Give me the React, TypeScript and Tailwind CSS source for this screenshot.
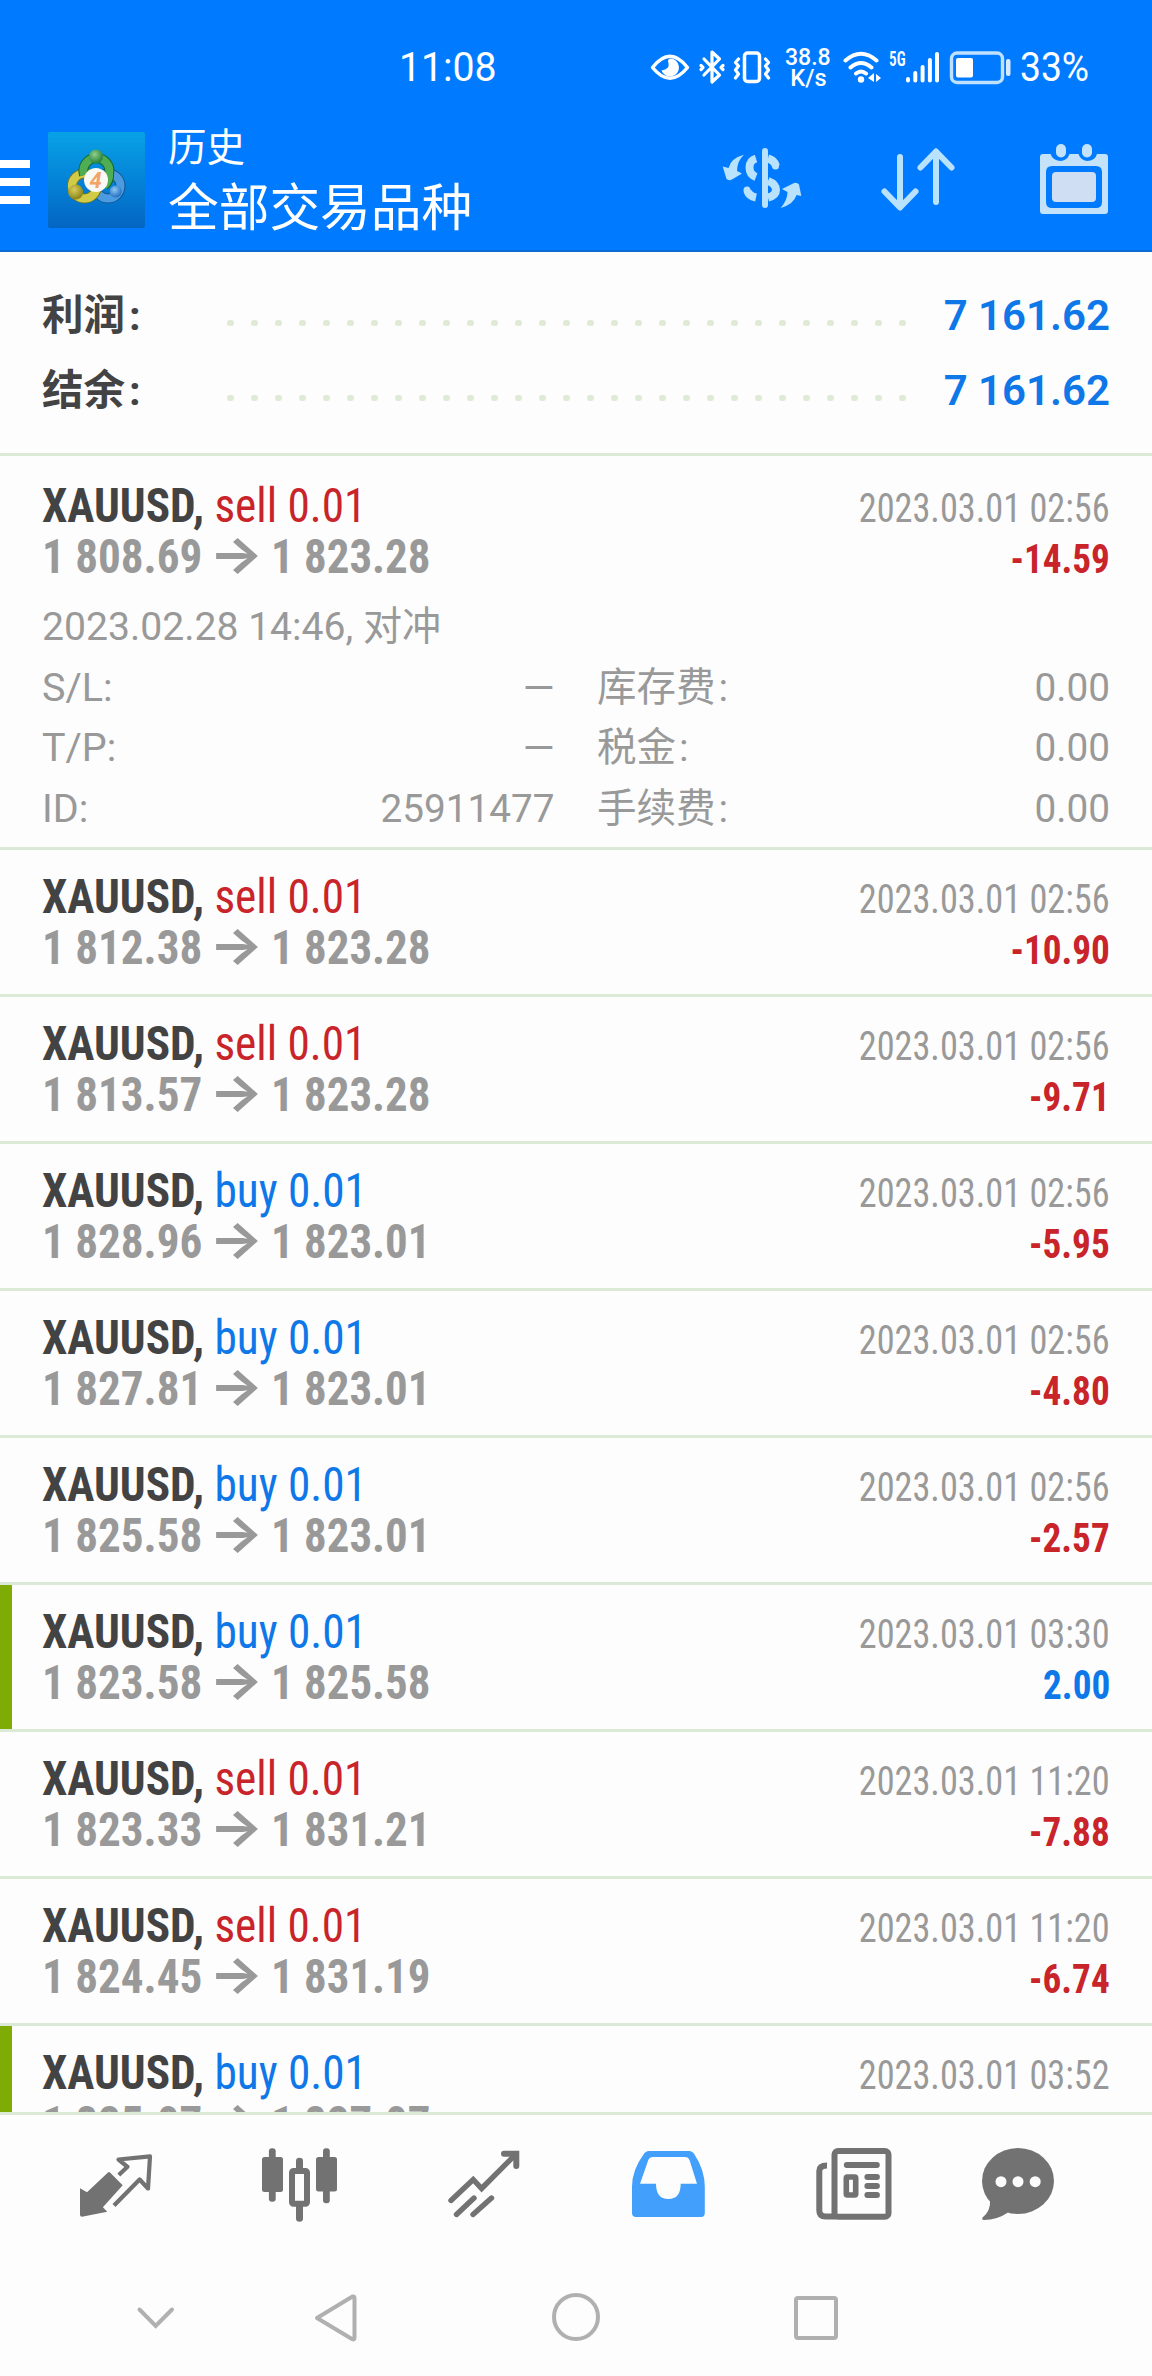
import type { ReactNode } from 'react'

type Side = 'buy' | 'sell'

interface Deal {
  side: Side
  open: string
  close: string
  time: string
  profit?: string
  takeProfit?: boolean
}

const deals: Deal[] = [
  { side: 'sell', open: '1 808.69', close: '1 823.28', time: '2023.03.01 02:56', profit: '-14.59' },
  { side: 'sell', open: '1 812.38', close: '1 823.28', time: '2023.03.01 02:56', profit: '-10.90' },
  { side: 'sell', open: '1 813.57', close: '1 823.28', time: '2023.03.01 02:56', profit: '-9.71' },
  { side: 'buy', open: '1 828.96', close: '1 823.01', time: '2023.03.01 02:56', profit: '-5.95' },
  { side: 'buy', open: '1 827.81', close: '1 823.01', time: '2023.03.01 02:56', profit: '-4.80' },
  { side: 'buy', open: '1 825.58', close: '1 823.01', time: '2023.03.01 02:56', profit: '-2.57' },
  { side: 'buy', open: '1 823.58', close: '1 825.58', time: '2023.03.01 03:30', profit: '2.00', takeProfit: true },
  { side: 'sell', open: '1 823.33', close: '1 831.21', time: '2023.03.01 11:20', profit: '-7.88' },
  { side: 'sell', open: '1 824.45', close: '1 831.19', time: '2023.03.01 11:20', profit: '-6.74' },
  { side: 'buy', open: '1 825.07', close: '1 827.07', time: '2023.03.01 03:52', takeProfit: true },
]

const details = [
  ['S/L:', '–', '库存费', '0.00'],
  ['T/P:', '–', '税金', '0.00'],
  ['ID:', '25911477', '手续费', '0.00'],
]

const StatusBar = () => (
  <div className="flex h-32 items-center pt-2 text-white">
    <span className="ml-[399px] w-[250px] text-[40px] leading-none">
      <span className="inline-block origin-left scale-x-[.98]">11:08</span>
    </span>
    <svg width="42" height="36" viewBox="649 50 42 36" fill="none">
      <path d="M652.5 67.5Q670 45 687.500 67.500Q670 89 652.500 67.500Z" stroke="#fff" strokeWidth="3.500" strokeLinejoin="round" />
      <path d="M670 58.500A9 9 0 1 1 661.500 70.500Q670 69 668.500 63Q667 59.500 670 58.500Z" fill="#fff" />
    </svg>
    <svg className="ml-[7px]" width="28" height="36" viewBox="698 50 28 36" fill="none" stroke="#fff" strokeWidth="3.200" strokeLinejoin="round" strokeLinecap="round">
      <path d="M704 59L719.500 75L712 82V52L719.500 59L704 75" />
      <path d="M701 65.500L703 67.500L701 69.500M723 65.500L721 67.500L723 69.500" />
    </svg>
    <svg className="ml-[5px]" width="42" height="36" viewBox="731 50 42 36" fill="none" stroke="#fff" strokeWidth="3.500" strokeLinejoin="round" strokeLinecap="round">
      <rect x="744.500" y="53" width="15" height="28.500" rx="3" />
      <path d="M738.500 59L735.500 62.500L738.500 66L735.500 70L738.500 74L735.500 78M765.500 59L768.500 62.500L765.500 66L768.500 70L765.500 74L768.500 78" strokeWidth="3.200" />
    </svg>
    <div className="ml-2.5 flex w-[50px] flex-col items-center text-[24px] leading-[21.5px] font-medium">
      <span className="scale-x-[.96]">38.8</span>
      <span className="scale-x-[.98]">K/s</span>
    </div>
    <svg className="ml-[8px]" width="42" height="36" viewBox="841 50 42 36" fill="none" stroke="#fff" strokeWidth="4" strokeLinecap="round">
      <path d="M845.500 60.500Q861 47 876.500 60.500M850.500 67.500Q861 58.500 871.500 67.500M856 73.500Q861 69.500 866 73.500" />
      <circle cx="861" cy="79.500" r="3.200" fill="#fff" stroke="none" />
      <path d="M874 73V82L868 78ZM876 74L881 78L876 82Z" fill="#fff" stroke="none" />
    </svg>
    <span className="ml-1.5 w-4 self-start pt-[41px] text-[20px] leading-[20px] font-semibold">
      <span className="inline-block origin-left scale-x-[.76] [font-stretch:75%]">5G</span>
    </span>
    <svg width="36" height="36" viewBox="905 50 36 36" stroke="#fff" strokeWidth="4" strokeLinecap="round">
      <path d="M908 79V80.500M915.300 73V80.500M922.600 67V80.500M929.900 60V80.500M937 54V80.500" />
    </svg>
    <svg className="ml-[7px]" width="66" height="36" viewBox="948 50 66 36">
      <rect x="951.500" y="53" width="51" height="29.500" rx="5.500" fill="none" stroke="#bfe0ff" strokeWidth="3.400" />
      <rect x="956" y="58" width="17" height="19.500" rx="2" fill="#fff" />
      <rect x="1006" y="59" width="4.500" height="17" rx="2" fill="#d6ebff" />
    </svg>
    <span className="ml-1.5 origin-left scale-x-[.93] text-[40px] leading-none">33%</span>
  </div>
)

const AppLogo = () => (
  <svg className="ml-[18px]" width="97" height="96" viewBox="0 0 97 96">
    <defs>
      <linearGradient id="sky" x1="0" y1="0" x2="0" y2="1">
        <stop offset="0" stopColor="#08a2e6" />
        <stop offset="0.5" stopColor="#0483d8" />
        <stop offset="1" stopColor="#0365c2" />
      </linearGradient>
      <radialGradient id="leaf" cx="0.4" cy="0.35" r="0.7">
        <stop offset="0" stopColor="#8fd08a" />
        <stop offset="1" stopColor="#1d7a35" />
      </radialGradient>
      <radialGradient id="gold" cx="0.4" cy="0.35" r="0.7">
        <stop offset="0" stopColor="#d9ce5a" />
        <stop offset="1" stopColor="#827d14" />
      </radialGradient>
      <radialGradient id="water" cx="0.4" cy="0.35" r="0.7">
        <stop offset="0" stopColor="#8cc8f5" />
        <stop offset="1" stopColor="#1c68bd" />
      </radialGradient>
    </defs>
    <rect width="97" height="96" rx="2" fill="url(#sky)" />
    <circle cx="60" cy="54" r="12.500" fill="none" stroke="#155390" strokeWidth="10" />
    <circle cx="60" cy="54" r="12.500" fill="none" stroke="#4b9be0" strokeWidth="8" />
    <circle cx="36.500" cy="54" r="12.500" fill="none" stroke="#76781c" strokeWidth="10" />
    <circle cx="36.500" cy="54" r="12.500" fill="none" stroke="#d2cb48" strokeWidth="8" />
    <path d="M36 43A13 13 0 1 1 61 42Q62 48 56 54" fill="none" stroke="#17672c" strokeWidth="10" />
    <path d="M36 43A13 13 0 1 1 61 42Q62 48 56 54" fill="none" stroke="#4fae53" strokeWidth="8" />
    <circle cx="48" cy="24.500" r="7" fill="url(#leaf)" />
    <circle cx="27.700" cy="60" r="7.500" fill="url(#gold)" />
    <circle cx="67.700" cy="59.500" r="6" fill="url(#water)" />
    <circle cx="48" cy="48" r="12" fill="#f8f8f4" />
    <text x="47.500" y="56" textAnchor="middle" fontFamily="Roboto, sans-serif" fontSize="22" fontWeight="700" fontStyle="italic" fill="#f2a468">
      4
    </text>
  </svg>
)

const Header = () => (
  <div className="flex h-[124px] items-start border-b-2 border-[#0b6cd4] pt-1 text-white">
    <div className="mt-7 flex w-[30px] flex-col gap-2.5">
      <div className="h-2 bg-white" />
      <div className="h-2 bg-white" />
      <div className="h-2 bg-white" />
    </div>
    <AppLogo />
    <div className="-mt-1 ml-[23px] flex-1">
      <div className="text-[38.5px] leading-[39px]">历史</div>
      <div className="mt-3 text-[50.7px] leading-[60px]">全部交易品种</div>
    </div>
    <svg className="mt-2" width="88" height="80" viewBox="0 0 88 80" fill="none">
      <g stroke="#b9e2fc" strokeWidth="8">
        <path d="M40 18.500Q33.500 20.500 33.500 27.500Q33.500 34.500 40 37" />
        <path d="M31.500 51Q33 56 40 57.500" />
        <path d="M52 18.500Q58 20 60 26" />
        <path d="M52 41Q60 44 60 50Q60 55.500 52 57.500" />
      </g>
      <g stroke="#b9e2fc" strokeLinecap="round">
        <path d="M49 11V65" strokeWidth="6" />
        <path d="M31 50V50.500M59.500 25.500V26" strokeWidth="7" />
      </g>
      <g fill="#b9e2fc">
        <path d="M28 14.700Q15 18 12.500 28L6.700 26.500L10.500 39Q12.500 41 16 39.500L26 33.500L21 31Q21 21 28 14.700Z" />
        <path d="M64.700 68Q78 64 80.500 55L85.300 56L83 44.500Q80.500 41.500 77 43.500L66 49L71.500 52Q71.500 60 64.700 68Z" />
      </g>
    </svg>
    <svg className="mt-2 ml-[72px]" width="84" height="80" viewBox="0 0 84 80" fill="none" stroke="#b9e2fc" strokeWidth="6" strokeLinecap="round" strokeLinejoin="round">
      <path d="M24 17V67M8.500 51.500L24 67.500L39.500 51.500" />
      <path d="M60 62V12M44.500 27.500L60 11.500L75.500 27.500" />
    </svg>
    <svg className="mt-2 mr-9 ml-[76px]" width="80" height="80" viewBox="0 0 80 80" fill="#c4e3fa">
      <path
        fillRule="evenodd"
        d="M7 14H14.500Q17 21 25 21Q31.500 20 33.500 14H42.500Q44.500 20 51 21Q59 21 61 14H69Q72 14 72 17V71Q72 74 69 74H7Q4 74 4 71V17Q4 14 7 14ZM16 26Q10 26 10 32V62Q10 68 16 68H60Q66 68 66 62V32Q66 26 60 26Z"
      />
      <rect x="16" y="32" width="44" height="30" rx="4" fill="#cfdef2" />
      <rect x="20" y="4" width="10" height="13.500" rx="5" />
      <rect x="46" y="4" width="10" height="13.500" rx="5" />
    </svg>
  </div>
)

const SummaryRow = ({ label, value }: { label: string; value: string }) => (
  <div className="flex h-[75px] items-center">
    <span className="w-[185px] text-[41.5px] leading-[75px] font-bold text-[#434343]">
      {label}
      <span className="ml-1">:</span>
    </span>
    <div className="mt-[15px] flex flex-1 gap-[17.5px]">
      {Array.from({ length: 29 }, (_, i) => (
        <div key={i} className="size-[6.5px] rounded-full bg-[#e0ebd5]" />
      ))}
    </div>
    <span className="text-[42px] leading-[75px] font-semibold text-[#0f78e8]">{value}</span>
  </div>
)

const Profit = ({ value }: { value: string }) => (
  <span className={value.startsWith('-') ? 'text-[#c8242a]' : 'text-[#0f78e8]'}>{value}</span>
)

const DealRow = ({ deal, children }: { deal: Deal; children?: ReactNode }) => (
  <div className="flex shrink-0 border-b-[3px] border-[#dbead7]">
    <div className={deal.takeProfit ? 'w-3 bg-[#7eac05]' : 'w-3'} />
    <div className={children ? 'h-[391px] flex-1 pt-6 pr-[42px] pl-[30px]' : 'h-36 flex-1 pt-[21px] pr-[42px] pl-[30px]'}>
      <div className="flex h-[102px] justify-between">
        <div className="text-[48px] leading-[51px] whitespace-nowrap">
          <div className="w-fit origin-left scale-x-[.943] [font-stretch:75%]">
            <span className="font-bold text-[#434343]">XAUUSD,</span>{' '}
            <span className={deal.side === 'buy' ? 'text-[#0f78e8]' : 'text-[#c8242a]'}>{deal.side} 0.01</span>
          </div>
          <div className="flex font-bold text-[#999]">
            <span className="w-[169px] origin-left scale-x-[.94] [font-stretch:75%]">{deal.open}</span>
            <span className="-mt-[3px] flex h-[51px] w-[50px] justify-center font-[Inter] text-[51px]">
              <span className="scale-x-[1.12]">→</span>
            </span>
            <span className="ml-2.5 origin-left scale-x-[.935] [font-stretch:75%]">{deal.close}</span>
          </div>
        </div>
        <div className="flex flex-col items-end pt-[3px] text-[40px] leading-[51px] [font-stretch:75%]">
          <span className="origin-right scale-x-[.907] text-[#999]">{deal.time}</span>
          {deal.profit && (
            <span className="origin-right scale-x-[.93] font-bold">
              <Profit value={deal.profit} />
            </span>
          )}
        </div>
      </div>
      {children}
    </div>
  </div>
)

const DealDetails = () => (
  <div className="mt-[14.5px] text-[39.5px] text-[#999]">
    <div className="w-fit origin-left scale-x-[.99] leading-[60px]">2023.02.28 14:46, 对冲</div>
    {details.map(([left, leftValue, right, rightValue]) => (
      <div key={left} className="flex h-[60.5px] leading-[61px]">
        <div className="flex w-[513px] justify-between">
          <span>{left}</span>
          <span className={leftValue === '–' ? '-mr-0.5 origin-right scale-x-[1.38]' : 'origin-right scale-x-[.98]'}>{leftValue}</span>
        </div>
        <div className="ml-[42px] flex flex-1 justify-between">
          <span>
            {right}
            <span className="ml-[3px]">:</span>
          </span>
          <span className="origin-right scale-x-[.98]">{rightValue}</span>
        </div>
      </div>
    ))}
  </div>
)

const TabBar = () => (
  <div className="flex h-[145px] gap-[104px] pt-[29px] pl-[76px] text-[#727272]">
    <svg width="80" height="80" viewBox="0 0 80 80" fill="currentColor">
      <path d="M4 44.300L11 48.300L32 28.500Q33 27.500 34 28.500L46.700 41.300L26.900 63.300L31.300 67.700L6 72.700Q4 72.700 4 71Z" />
      <path d="M42.800 31L51.500 22.800L42.500 15.500L74 12.300L72 44.500L63.600 35.500L38 61.500" fill="none" stroke="currentColor" strokeWidth="4.200" strokeLinejoin="round" />
    </svg>
    <svg width="80" height="80" viewBox="0 0 80 80" fill="currentColor">
      <rect x="8.900" y="4.300" width="6.800" height="53.500" rx="3" />
      <rect x="2" y="13" width="21" height="35" rx="2.500" />
      <rect x="63" y="4.300" width="6.800" height="55" rx="3" />
      <rect x="56" y="13" width="21" height="34.500" rx="2.500" />
      <path d="M36 27V17Q36 13.700 39.500 13.700Q43 13.700 43 17V27ZM36 60V74.500Q36 77.700 39.500 77.700Q43 77.700 43 74.500V60Z" />
      <rect x="32" y="27" width="15" height="32.700" rx="1.500" fill="none" stroke="currentColor" strokeWidth="6" />
    </svg>
    <svg width="80" height="80" viewBox="0 0 80 80" fill="none" stroke="currentColor" strokeWidth="5.400" strokeLinecap="round">
      <path d="M7 56.500L29.200 35.500L37.600 44.500L70 12" strokeLinejoin="miter" />
      <path d="M60 9.700H72.300V22" strokeWidth="6" />
      <path d="M12.500 70.500L30 54M29 70.500L47.500 54" />
    </svg>
    <svg width="80" height="80" viewBox="0 0 80 80" fill="#429ffb">
      <path
        fillRule="evenodd"
        d="M21 7H61Q64.500 7 66.500 10.500Q76.800 26 76.800 43V69Q76.800 73 73 73H8Q4 73 4 69V43Q4 26 15.500 10.500Q17.500 7 21 7ZM25 13Q21.500 13 20.300 16L12 39.700H28Q28 55 40.300 55Q52.700 55 52.700 39.700H69L61.500 16Q60.400 13 57 13Z"
      />
    </svg>
    <svg width="80" height="80" viewBox="0 0 80 80" fill="currentColor">
      <path d="M15 21.500Q7.300 21.500 7.300 27V66.500Q7.300 72.500 13.500 72.500H24" fill="none" stroke="currentColor" strokeWidth="6" />
      <rect x="22.500" y="7" width="54" height="65.700" rx="3.500" fill="none" stroke="currentColor" strokeWidth="6" />
      <rect x="31.800" y="18" width="36" height="6" rx="3" />
      <rect x="34.300" y="33" width="9.400" height="18" rx="1" fill="none" stroke="currentColor" strokeWidth="5.600" />
      <rect x="52.400" y="30" width="15.500" height="6" rx="3" />
      <rect x="52.400" y="39" width="15.500" height="6" rx="3" />
      <rect x="52.400" y="48" width="15.500" height="6" rx="3" />
    </svg>
    <svg className="-ml-5" width="80" height="80" viewBox="0 0 80 80" fill="currentColor">
      <ellipse cx="42" cy="37" rx="36" ry="33" />
      <path d="M14 55Q15 67 6.500 73.500Q5.500 76 8 76Q21 76 32 68.500Z" />
      <g fill="#fdfdfd">
        <circle cx="25" cy="37.700" r="5.500" />
        <circle cx="42" cy="37.700" r="5.500" />
        <circle cx="59.200" cy="37.700" r="5.500" />
      </g>
    </svg>
  </div>
)

const SystemNav = () => (
  <div className="flex h-[116px] items-center pl-[130px]">
    <svg width="52" height="52" viewBox="130 2292 52 52" fill="none" stroke="#b0b0b0" strokeWidth="4" strokeLinecap="round">
      <path d="M139.500 2309.500L155.700 2326L172 2309.500" />
    </svg>
    <svg className="ml-[128px]" width="52" height="52" viewBox="310 2292 52 52" fill="none" stroke="#b0b0b0" strokeWidth="4" strokeLinejoin="round">
      <path d="M317 2318L352.500 2296.500Q354.500 2296 354.500 2298V2337.500Q354.500 2340.500 352 2339Z" />
    </svg>
    <svg className="ml-[188px]" width="52" height="52" viewBox="550 2292 52 52" fill="none" stroke="#b0b0b0" strokeWidth="4">
      <circle cx="576" cy="2317" r="22" />
    </svg>
    <svg className="ml-[188px]" width="52" height="52" viewBox="790 2292 52 52" fill="none" stroke="#b0b0b0" strokeWidth="4">
      <rect x="796" y="2298" width="40" height="40" rx="2" />
    </svg>
  </div>
)

export default function App() {
  return (
    <div className="flex h-[2376px] w-[1152px] flex-col overflow-hidden bg-[#fdfdfd] font-['Roboto','Noto_Sans_CJK_SC',sans-serif]">
      <div className="bg-[#007bff]">
        <StatusBar />
        <Header />
      </div>
      <div className="h-[204px] border-b-[3px] border-[#dbead7] px-[42px] pt-[26px]">
        <SummaryRow label="利润" value="7 161.62" />
        <SummaryRow label="结余" value="7 161.62" />
      </div>
      <div className="flex h-[1656px] flex-col overflow-hidden">
        {deals.map((deal, i) => (
          <DealRow key={i} deal={deal}>
            {i === 0 && <DealDetails />}
          </DealRow>
        ))}
      </div>
      <div className="border-t-[3px] border-[#dbead7]">
        <TabBar />
        <SystemNav />
      </div>
    </div>
  )
}
